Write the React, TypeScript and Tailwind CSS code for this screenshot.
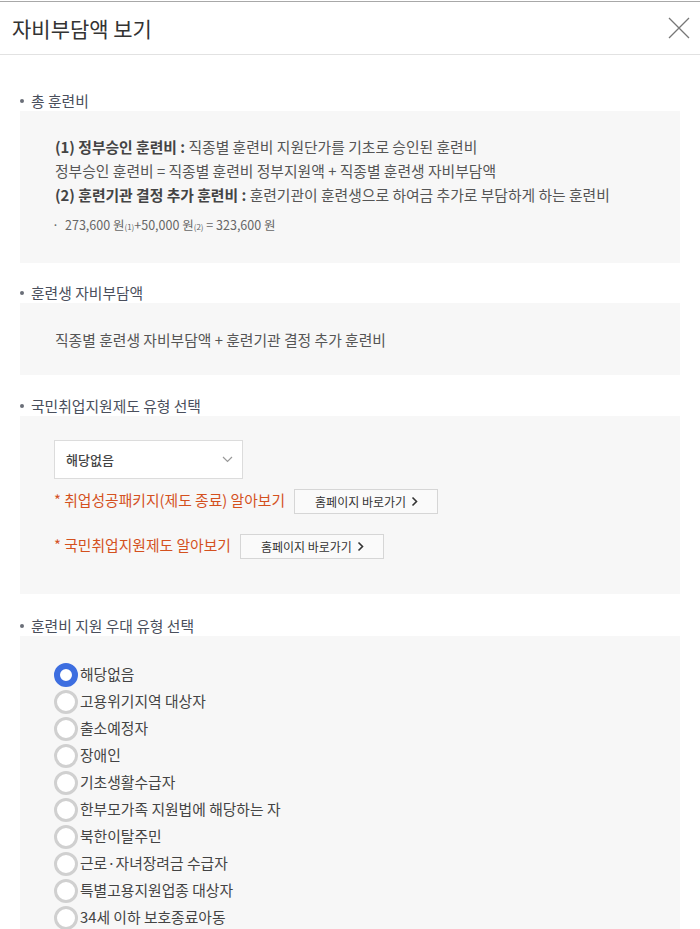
import { useState } from "react";

const prefTypes = [
  "해당없음",
  "고용위기지역 대상자",
  "출소예정자",
  "장애인",
  "기초생활수급자",
  "한부모가족 지원법에 해당하는 자",
  "북한이탈주민",
  "근로·자녀장려금 수급자",
  "특별고용지원업종 대상자",
  "34세 이하 보호종료아동",
];

function SectionTitle({ children }: { children: React.ReactNode }) {
  return (
    <div className="flex items-center h-5 text-[14.8px] leading-5 text-[#4a4f5c]">
      <span className="w-[4px] h-[4px] rounded-full bg-[#6a6e78] ml-[2px] mr-[7px]" />
      <span>{children}</span>
    </div>
  );
}

function LinkButton() {
  return (
    <button className="h-[25px] pl-[20px] pr-[19px] border border-[#d6d6d6] bg-[#fafafa] text-[12px] text-[#333] flex items-center gap-[5px]">
      홈페이지 바로가기
      <svg width="7" height="11" viewBox="0 0 7 11" fill="none">
        <path d="M1.5 1.5L5.5 5.5L1.5 9.5" stroke="#333" strokeWidth="1.6" />
      </svg>
    </button>
  );
}

export default function App() {
  const [selected, setSelected] = useState(0);

  return (
    <div
      className="w-[700px] min-h-[929px] bg-white pt-px"
      style={{ fontFamily: '"Noto Sans CJK KR", "Noto Sans", sans-serif' }}
    >
      {/* Header */}
      <div className="h-[54px] border-t border-b border-t-[#a8a8a8] border-b-[#e2e2e2] flex items-center justify-between pl-[12px] pr-[10px]">
        <h1 className="text-[21px] text-[#333] leading-none">자비부담액 보기</h1>
        <svg width="22" height="22" viewBox="0 0 22 22" fill="none">
          <path d="M1 1L21 21M21 1L1 21" stroke="#777" strokeWidth="1.3" />
        </svg>
      </div>

      <div className="pt-[36px] text-[#555]">
        {/* 총 훈련비 */}
        <div className="pl-[18px]">
          <SectionTitle>총 훈련비</SectionTitle>
        </div>
        <div className="mx-[20px] bg-[#f7f7f7] pl-[35px] pt-[24px] pb-[26px] text-[14.8px] leading-[24px]">
          <p>
            <span className="font-bold text-[#444]">(1) 정부승인 훈련비 : </span>
            직종별 훈련비 지원단가를 기초로 승인된 훈련비
          </p>
          <p>정부승인 훈련비 = 직종별 훈련비 정부지원액 + 직종별 훈련생 자비부담액</p>
          <p>
            <span className="font-bold text-[#444]">(2) 훈련기관 결정 추가 훈련비 : </span>
            훈련기관이 훈련생으로 하여금 추가로 부담하게 하는 훈련비
          </p>
          <p className="mt-[8px] text-[12.5px] leading-[20px] text-[#666] -ml-[3px]">
            <span className="mr-[6px]">·</span>
            273,600 원<span className="text-[8px]">(1)</span>+50,000 원
            <span className="text-[8px]">(2)</span> = 323,600 원
          </p>
        </div>

        {/* 훈련생 자비부담액 */}
        <div className="pl-[18px] mt-[20px]">
          <SectionTitle>훈련생 자비부담액</SectionTitle>
        </div>
        <div className="mx-[20px] bg-[#f7f7f7] pl-[35px] pt-[25px] pb-[23px] text-[14.8px] leading-[24px]">
          <p>직종별 훈련생 자비부담액 + 훈련기관 결정 추가 훈련비</p>
        </div>

        {/* 국민취업지원제도 유형 선택 */}
        <div className="pl-[18px] mt-[21px]">
          <SectionTitle>국민취업지원제도 유형 선택</SectionTitle>
        </div>
        <div className="mx-[20px] bg-[#f7f7f7] pl-[34px] pt-[24px] pb-[35px]">
          <div className="w-[189px] h-[39px] bg-white border border-[#dcdcdc] flex items-center justify-between pl-[11px] pr-[9px]">
            <span className="text-[13px] font-medium text-[#444]">해당없음</span>
            <svg width="11" height="7" viewBox="0 0 11 7" fill="none">
              <path d="M1 1L5.5 5.5L10 1" stroke="#999" strokeWidth="1.2" />
            </svg>
          </div>
          <div className="mt-[10px] flex items-center gap-[9px]">
            <span className="text-[14.8px] leading-[20px] text-[#d4511e] -mt-[3px]">
              * 취업성공패키지(제도 종료) 알아보기
            </span>
            <LinkButton />
          </div>
          <div className="mt-[20px] flex items-center gap-[9px]">
            <span className="text-[14.8px] leading-[20px] text-[#d4511e] -mt-[3px]">
              * 국민취업지원제도 알아보기
            </span>
            <LinkButton />
          </div>
        </div>

        {/* 훈련비 지원 우대 유형 선택 */}
        <div className="pl-[18px] mt-[22px]">
          <SectionTitle>훈련비 지원 우대 유형 선택</SectionTitle>
        </div>
        <div className="mx-[20px] bg-[#f7f7f7] pl-[34px] pt-[25px] pb-[20px]">
          {prefTypes.map((label, i) => (
            <label
              key={label}
              className="flex items-center h-[27px] cursor-pointer text-[14.8px] text-[#444]"
              onClick={() => setSelected(i)}
            >
              {selected === i ? (
                <span className="w-[24px] h-[24px] rounded-full border-[6px] border-[#3d6ee0] bg-white shrink-0" />
              ) : (
                <span className="w-[24px] h-[24px] rounded-full border-[3px] border-[#d0d0d0] bg-white shrink-0" />
              )}
              <span className="ml-[2px]">{label}</span>
            </label>
          ))}
        </div>
      </div>
    </div>
  );
}
